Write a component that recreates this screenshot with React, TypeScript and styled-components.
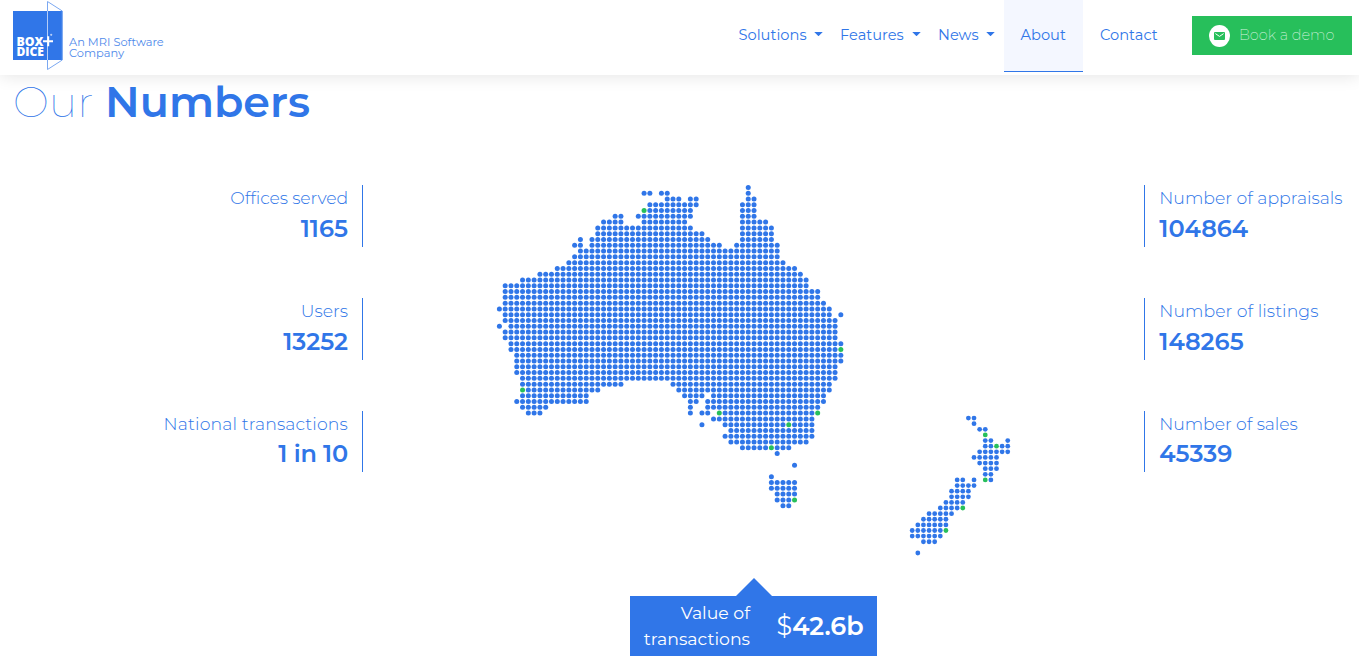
import React from 'react';
import styled, { createGlobalStyle } from 'styled-components';

const BLUE = '#3076e8';
const GREEN = '#27bf5b';

const GlobalStyle = createGlobalStyle`
  * { box-sizing: border-box; }
  body {
    margin: 0;
    background: #fff;
    color: ${BLUE};
    font-family: Montserrat, Inter, "Liberation Sans", sans-serif;
    overflow: hidden;
  }
`;

const Page = styled.div`
  width: 1359px;
  height: 666px;
  display: flex;
  flex-direction: column;
`;

const Header = styled.header`
  height: 75px;
  flex: none;
  display: flex;
  align-items: flex-start;
  padding: 0 7px 0 13px;
  box-shadow: 0 1px 16px rgba(0, 0, 0, 0.11);
`;

const LogoMark = styled.svg`
  display: block;
  width: 50px;
  height: 71px;
  flex: none;
`;

const Tagline = styled.div`
  margin: 37px auto 0 6px;
  font-size: 11.4px;
  line-height: 10.5px;
  font-weight: 400;
  opacity: 0.85;
`;

const Nav = styled.nav`
  display: flex;
  align-items: flex-start;
`;

const NavItem = styled.a<{ $w: number; $pad?: number; $active?: boolean }>`
  width: ${(p) => p.$w}px;
  height: 72px;
  padding: 0 0 2px ${(p) => p.$pad ?? 0}px;
  display: flex;
  align-items: center;
  font-size: 14.65px;
  line-height: 20px;
  font-weight: 370;
  color: ${BLUE};
  white-space: nowrap;
  background: ${(p) => (p.$active ? '#f4f7ff' : 'transparent')};
  border-bottom: 1px solid ${(p) => (p.$active ? BLUE : 'transparent')};
`;

const Caret = styled.span<{ $gap?: number }>`
  margin: -1px ${(p) => p.$gap ?? 17}px 0 auto;
  width: 9px;
  height: 4.5px;
  background: ${BLUE};
  clip-path: polygon(0 0, 100% 0, 50% 100%);
`;

const DemoButton = styled.button`
  margin: 16px 0 0 18px;
  width: 160px;
  height: 39px;
  padding: 0 0 1px 17px;
  border: 0;
  background: ${GREEN};
  color: #d4f2de;
  display: flex;
  align-items: center;
  font: 250 14.5px Montserrat, Inter, sans-serif;
  white-space: nowrap;
  svg { margin: 1px 9px 0 0; flex: none; }
`;

const Title = styled.h1`
  margin: 1px 0 0 13px;
  height: 52px;
  font-size: 42.8px;
  line-height: 52px;
  font-weight: 120;
  display: flex;
  white-space: nowrap;
`;

const TitleStrong = styled.strong`
  font-weight: 600;
  margin-left: 11.5px;
`;

const Content = styled.main`
  display: flex;
  justify-content: space-between;
  height: 450px;
`;

const StatColumn = styled.section`
  width: 363px;
  padding-top: 57.2px;
  display: flex;
  flex-direction: column;
  gap: 51.35px;
`;

const RightColumn = styled(StatColumn)`
  width: 215px;
`;

const Stat = styled.div<{ $side: 'left' | 'right' }>`
  height: 61.5px;
  display: flex;
  flex-direction: column;
  white-space: nowrap;
  align-items: ${(p) => (p.$side === 'left' ? 'flex-end' : 'flex-start')};
  border-${(p) => (p.$side === 'left' ? 'right' : 'left')}: 1px solid ${BLUE};
  padding: 0 ${(p) => (p.$side === 'left' ? '14px 0 0' : '0 0 14.3px')};
`;

const StatLabel = styled.span<{ $ls: number }>`
  font-size: 17.3px;
  line-height: 26.55px;
  font-weight: 300;
  letter-spacing: ${(p) => p.$ls}px;
`;

const StatValue = styled.span<{ $ls?: number }>`
  font-size: 24px;
  line-height: 34.6px;
  font-weight: 600;
  letter-spacing: ${(p) => p.$ls ?? 0}px;
`;

const MapArt = styled.svg`
  display: block;
  width: 530px;
  height: 390px;
  margin-top: 52px;
  margin-left: 3px;
`;

const Callout = styled.aside`
  width: 247px;
  margin-left: 630px;
  display: flex;
  flex-direction: column;
  align-items: center;
`;

const Arrow = styled.span`
  border: 18px solid transparent;
  border-bottom-color: ${BLUE};
  border-top: 0;
`;

const CalloutBody = styled.div`
  width: 247px;
  height: 60px;
  background: ${BLUE};
  color: #fff;
  display: flex;
  align-items: center;
  padding-left: 13px;
`;

const CalloutLabel = styled.span`
  width: 107px;
  display: flex;
  flex-direction: column;
  align-items: flex-end;
  font-size: 17.3px;
  line-height: 26px;
  white-space: nowrap;
`;

const CalloutValue = styled.span`
  margin: -2px 0 0 26.5px;
  font-size: 25.4px;
  font-weight: 600;
  white-space: nowrap;
  i { font-style: normal; font-weight: 400; }
`;

type Row = [number, ...Array<[number, number]>];

/* Filled column ranges of each dotted row. */
const AUSTRALIA: Row[] = [
  [0, [43, 43]], [1, [25, 26], [28, 29], [43, 43]], [2, [29, 31], [33, 34], [43, 44]],
  [3, [26, 34], [42, 44]], [4, [25, 33], [42, 44]], [5, [20, 21], [24, 33], [42, 44]],
  [6, [18, 21], [25, 32], [42, 46]], [7, [17, 33], [42, 47]], [8, [17, 35], [42, 47]],
  [9, [14, 14], [16, 36], [42, 47]], [10, [13, 14], [16, 38], [41, 48]], [11, [14, 48]],
  [12, [13, 48]], [13, [12, 49]], [14, [10, 51]], [15, [7, 52]], [16, [4, 53]], [17, [1, 53]],
  [18, [1, 55]], [19, [1, 55]], [20, [1, 56]], [21, [0, 57]], [22, [1, 57], [59, 59]],
  [23, [1, 58]], [24, [0, 0], [2, 58]], [25, [1, 58]], [26, [1, 58]], [27, [2, 59]],
  [28, [2, 59]], [29, [3, 59]], [30, [3, 59]], [31, [3, 58]], [32, [3, 58]], [33, [4, 58]],
  [34, [4, 21], [30, 57]], [35, [4, 17], [31, 57]], [36, [4, 15], [32, 35], [37, 56]],
  [37, [3, 15], [33, 34], [36, 56]], [38, [4, 8], [33, 33], [36, 55]],
  [39, [5, 7], [33, 33], [35, 36], [38, 55]], [40, [37, 54]], [41, [35, 35], [39, 54]],
  [42, [40, 54]], [43, [39, 54]], [44, [40, 53]], [45, [42, 50]], [46, [48, 48]],
  [48, [51, 51]], [50, [47, 47]], [51, [47, 51]], [52, [47, 51]], [53, [48, 51]],
  [54, [48, 51]], [55, [49, 50]],
];
const AUSTRALIA_CITIES = ['4:25', '28:59', '35:4', '39:38', '39:55', '41:50', '45:47', '54:51'];

const NEW_ZEALAND: Row[] = [
  [0, [10, 11]], [1, [11, 11]], [2, [12, 13]], [3, [13, 13]], [4, [13, 14], [17, 17]],
  [5, [13, 17]], [6, [12, 17]], [7, [11, 15]], [8, [12, 15]], [9, [13, 15]], [10, [13, 14]],
  [11, [8, 9], [11, 11], [13, 14]], [12, [8, 11]], [13, [7, 10]], [14, [7, 10]], [15, [6, 9]],
  [16, [5, 9]], [17, [3, 7]], [18, [2, 6]], [19, [1, 6]], [20, [0, 6]], [21, [0, 5]],
  [22, [2, 4]], [24, [1, 1]],
];
const NEW_ZEALAND_CITIES = ['3:13', '5:15', '11:13', '16:9', '20:6'];

interface DotsProps { rows: Row[]; cities: string[]; x: number; y: number; pitch: number; r: number }

const Dots = ({ rows, cities, x, y, pitch, r }: DotsProps) => (
  <g>
    {rows.flatMap(([row, ...spans]) =>
      (spans as Array<[number, number]>).flatMap(([from, to]) =>
        Array.from({ length: to - from + 1 }, (_, i) => {
          const col = from + i;
          const key = `${row}:${col}`;
          return (
            <circle
              key={key}
              cx={x + col * pitch}
              cy={y + row * pitch}
              r={r}
              fill={cities.includes(key) ? GREEN : BLUE}
            />
          );
        })
      )
    )}
  </g>
);

const Logo = () => (
  <LogoMark viewBox="13 0 50 71">
    <rect x="13" y="11" width="49.5" height="49" fill={BLUE} />
    <path d="M47.5 60V69.5L62.3 60V11L47.5 1.5V11" fill="none" stroke="#7ba8f1" strokeWidth="1" />
    <path d="M47.5 11V60" stroke="#b5cdf7" strokeWidth="1" />
    <g fill="#fff" fontFamily='"Open Sans", sans-serif' fontWeight="800" fontSize="12.2">
      <text x="16.5" y="45.8" textLength="27" lengthAdjust="spacingAndGlyphs">BOX</text>
      <text x="16.5" y="56" textLength="27.5" lengthAdjust="spacingAndGlyphs">DICE</text>
    </g>
    <path d="M43 41.3H53M48.2 36.3V46.3" stroke="#fff" strokeWidth="2" />
    <circle cx="51.2" cy="34.8" r="1.1" fill="#b5cdf7" />
  </LogoMark>
);

const LEFT = [
  { label: 'Offices served', value: '1165', ls: -0.12 },
  { label: 'Users', value: '13252', ls: 0 },
  { label: 'National transactions', value: '1 in 10', ls: 0.13, valueLs: -0.2 },
];
const RIGHT = [
  { label: 'Number of appraisals', value: '104864', ls: 0 },
  { label: 'Number of listings', value: '148265', ls: 0.04 },
  { label: 'Number of sales', value: '45339', ls: -0.07 },
];

export default function App() {
  return (
    <Page>
      <GlobalStyle />
      <Header>
        <Logo />
        <Tagline>An MRI Software<br />Company</Tagline>
        <Nav>
          <NavItem $w={101.5}>Solutions<Caret /></NavItem>
          <NavItem $w={98}>Features<Caret /></NavItem>
          <NavItem $w={66}>News<Caret $gap={9} /></NavItem>
          <NavItem $w={79} $pad={16.5} $active>About</NavItem>
          <NavItem $w={91} $pad={17}>Contact</NavItem>
        </Nav>
        <DemoButton>
          <svg width="21" height="22" viewBox="0 0 21 22">
            <ellipse cx="10.5" cy="11" rx="10.5" ry="11" fill="#fff" />
            <rect x="5" y="7" width="11" height="8" rx="1" fill={GREEN} />
            <path d="M6.4 8.6L10.5 11.4L14.6 8.6" fill="none" stroke="#fff" strokeWidth="1" />
          </svg>
          Book a demo
        </DemoButton>
      </Header>
      <Title>Our<TitleStrong>Numbers</TitleStrong></Title>
      <Content>
        <StatColumn>
          {LEFT.map((s) => (
            <Stat key={s.label} $side="left">
              <StatLabel $ls={s.ls}>{s.label}</StatLabel>
              <StatValue $ls={s.valueLs}>{s.value}</StatValue>
            </Stat>
          ))}
        </StatColumn>
        <MapArt viewBox="490 180 530 390">
          <Dots rows={AUSTRALIA} cities={AUSTRALIA_CITIES} x={499.4} y={187.4} pitch={5.787} r={2.5} />
          <Dots rows={NEW_ZEALAND} cities={NEW_ZEALAND_CITIES} x={912.2} y={418.1} pitch={5.62} r={2.4} />
        </MapArt>
        <RightColumn>
          {RIGHT.map((s) => (
            <Stat key={s.label} $side="right">
              <StatLabel $ls={s.ls}>{s.label}</StatLabel>
              <StatValue>{s.value}</StatValue>
            </Stat>
          ))}
        </RightColumn>
      </Content>
      <Callout>
        <Arrow />
        <CalloutBody>
          <CalloutLabel><span>Value of</span><span>transactions</span></CalloutLabel>
          <CalloutValue><i>$</i>42.6b</CalloutValue>
        </CalloutBody>
      </Callout>
    </Page>
  );
}
